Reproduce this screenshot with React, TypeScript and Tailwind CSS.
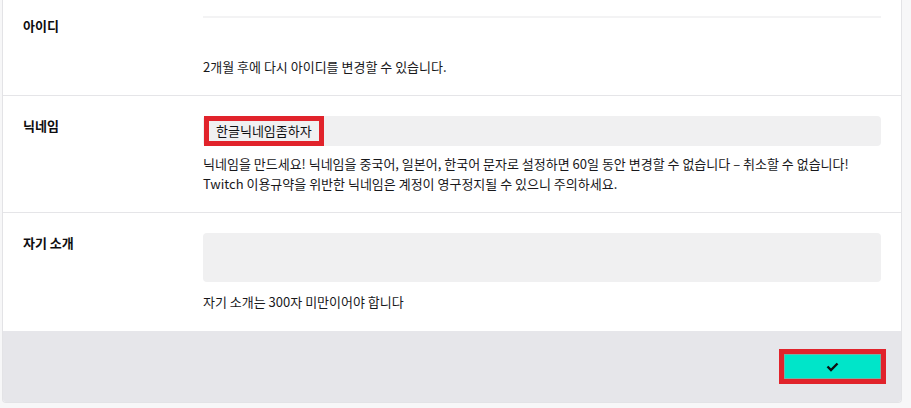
const font = { fontFamily: '"Noto Sans CJK KR", "Noto Sans", sans-serif' };

function CheckIcon() {
  return (
    <svg width="13" height="11" viewBox="0 0 13 11" aria-hidden="true">
      <path d="M1.5 5.5 L5 9 L11.5 2.5" fill="none" stroke="#0e0e10" strokeWidth="2.4" />
    </svg>
  );
}

export default function App() {
  return (
    <div className="min-h-screen bg-[#f7f7f8] pl-[2px] pb-[6px]" style={font}>
      <div className="w-[900px] bg-white border-x border-b border-[#e3e3e6] rounded-b-[4px] overflow-hidden text-[13px] leading-[20px] text-[#18181b]">
        {/* 아이디 */}
        <div className="flex px-5 border-b border-[#e5e5e8]">
          <div className="w-[180px] shrink-0 pt-4 font-bold text-[#0e0e10]">아이디</div>
          <div className="flex-1 pt-4 pb-[18px]">
            <div className="h-[2px] bg-[#f3f3f4]" />
            <p className="mt-[39px]">2개월 후에 다시 아이디를 변경할 수 있습니다.</p>
          </div>
        </div>

        {/* 닉네임 */}
        <div className="flex px-5 border-b border-[#e5e5e8]">
          <div className="w-[180px] shrink-0 pt-5 font-bold text-[#0e0e10]">닉네임</div>
          <div className="flex-1 pt-5 pb-[18px]">
            <div className="h-[30px] rounded-[4px] bg-[#f0f0f1] flex">
              <span className="h-full ml-px px-[7px] flex items-center border-[5px] border-[#e1232b] text-[#0e0e10]">
                한글닉네임좀하자
              </span>
            </div>
            <p className="mt-2">
              닉네임을 만드세요! 닉네임을 중국어, 일본어, 한국어 문자로 설정하면 60일 동안 변경할 수 없습니다 – 취소할 수 없습니다!
              <br />
              Twitch 이용규약을 위반한 닉네임은 계정이 영구정지될 수 있으니 주의하세요.
            </p>
          </div>
        </div>

        {/* 자기 소개 */}
        <div className="flex px-5">
          <div className="w-[180px] shrink-0 pt-5 font-bold text-[#0e0e10]">자기 소개</div>
          <div className="flex-1 pt-5 pb-[19px]">
            <div className="h-[49px] rounded-[4px] bg-[#f0f0f1]" />
            <p className="mt-[10px]">자기 소개는 300자 미만이어야 합니다</p>
          </div>
        </div>

        <div className="bg-[#e6e6ea] py-[18px] pr-[15px] flex justify-end">
          <div className="w-[107px] h-[35px] border-[5px] border-[#e1232b]">
            <button
              type="button"
              className="w-full h-full bg-[#00e5c9] border border-[#6fb3a6] flex items-center justify-center"
            >
              <CheckIcon />
            </button>
          </div>
        </div>
      </div>
    </div>
  );
}
